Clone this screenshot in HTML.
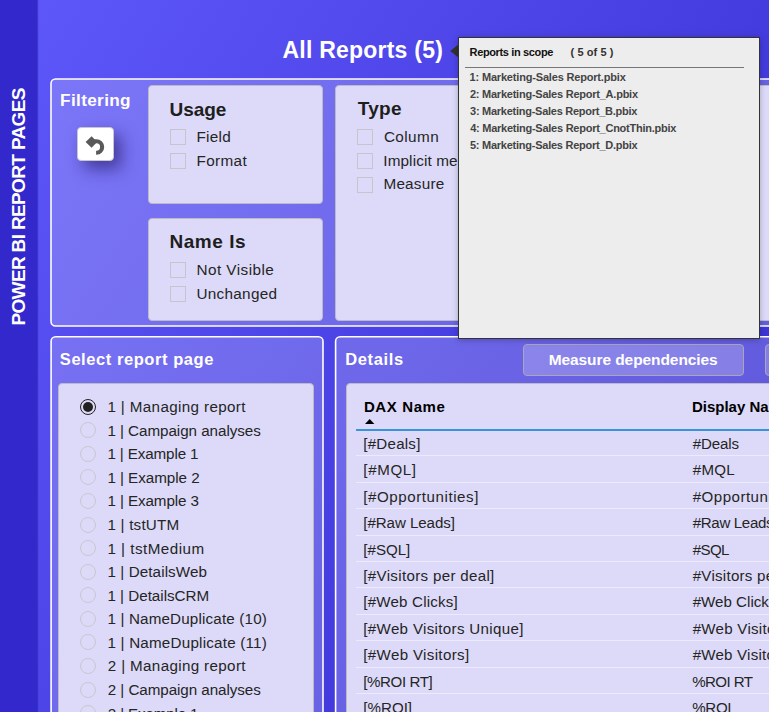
<!DOCTYPE html><html lang="en"><head><meta charset="utf-8"><title>Power BI Report Pages</title><style>
*{box-sizing:border-box;margin:0;padding:0}
html,body{width:769px;height:712px;overflow:hidden}
body{position:relative;font-family:"Liberation Sans",sans-serif;background:#4a3fe2}
#main{position:absolute;left:37px;top:0;width:732px;height:712px;background:linear-gradient(124deg,#5d56f9 0%,#352bce 100%)}
#side{position:absolute;left:0;top:0;width:37px;height:712px;background:#3228cc;box-shadow:1px 0 1px rgba(40,30,170,.55)}
.t{position:absolute;white-space:nowrap;line-height:1}
.card{position:absolute;background:#dcdaf8;border:1px solid #bcbac2;border-radius:4px}
.cb{position:absolute;width:16px;height:16px;border:1px solid #c6c4cc;background:transparent}
.rd{position:absolute;width:16px;height:16px;border:1px solid #c9c7cf;border-radius:50%}
.rd.on{border-color:#222}
.rd.on:after{content:"";position:absolute;left:2px;top:2px;width:10px;height:10px;border-radius:50%;background:#222}
.hl{position:absolute;height:1px;background:#ecebfc}
#tip{position:absolute;left:458px;top:37px;width:302px;height:302px;background:#ededed;border:1px solid #333;box-shadow:0 1px 6px rgba(0,0,0,.25)}
.btn{position:absolute;background:rgba(255,255,255,.22);border:1px solid #aaa6b8;border-radius:4px}
</style></head><body>
<div id="main"></div><div id="side"></div>
<div class="t" id="sidetxt" style="left:0;top:0;color:#fff;font-weight:bold;font-size:19px;transform-origin:0 0;transform:translate(8.90px,325.57px) rotate(-90deg);letter-spacing:-0.644px">POWER BI REPORT PAGES</div>
<div class="t " style="left:282.43px;top:39.33px;font-size:23.00px;font-weight:bold;letter-spacing:0.231px;color:#fff;">All Reports (5)</div>
<svg style="position:absolute;left:0;top:0" width="769" height="712" viewBox="0 0 769 712"><g fill="rgba(255,255,255,.2)" stroke="#fff" stroke-width="1.6"><rect x="51" y="79" width="760" height="247" rx="4.5"/><rect x="51.1" y="336.8" width="271.9" height="400" rx="4.5"/><rect x="335.6" y="336.8" width="480" height="400" rx="4.5"/></g></svg>
<div class="t " style="left:60.05px;top:92.14px;font-size:17.20px;font-weight:bold;letter-spacing:0.345px;color:#fff;">Filtering</div>
<div style="position:absolute;left:77px;top:127px;width:37px;height:34px;background:#fff;border:1px solid #c9c7c9;border-radius:4px;box-shadow:7px 8px 16px rgba(25,15,85,.55)"></div>
<svg style="position:absolute;left:77px;top:127px" width="37" height="34" viewBox="77 127 37 34"><polygon points="85.6,141.9 91.6,136.2 97.2,141.9 91.6,147.7" fill="#595959"/><path d="M93 141.3 H96.4 A5.75 5.75 0 0 1 96.4 152.8 H96.1" fill="none" stroke="#595959" stroke-width="4.1"/></svg>
<div class="card" style="left:148px;top:85px;width:175px;height:119px"></div>
<div class="card" style="left:148px;top:218px;width:175px;height:103px"></div>
<div class="card" style="left:335px;top:85px;width:480px;height:236px"></div>
<div class="t " style="left:169.56px;top:99.52px;font-size:19.00px;font-weight:bold;letter-spacing:-0.034px;color:#1e1e1e;">Usage</div>
<div class="t " style="left:169.43px;top:232.32px;font-size:19.00px;font-weight:bold;letter-spacing:0.546px;color:#1e1e1e;">Name Is</div>
<div class="t " style="left:357.69px;top:99.32px;font-size:19.00px;font-weight:bold;letter-spacing:0.309px;color:#1e1e1e;">Type</div>
<div class="cb" style="left:170px;top:129px"></div>
<div class="t " style="left:196.44px;top:129.45px;font-size:15.30px;letter-spacing:0.270px;color:#252525;">Field</div>
<div class="cb" style="left:170px;top:153px"></div>
<div class="t " style="left:196.44px;top:153.35px;font-size:15.30px;letter-spacing:0.362px;color:#252525;">Format</div>
<div class="cb" style="left:170px;top:262px"></div>
<div class="t " style="left:196.44px;top:262.25px;font-size:15.30px;letter-spacing:0.458px;color:#252525;">Not Visible</div>
<div class="cb" style="left:170px;top:286px"></div>
<div class="t " style="left:196.52px;top:285.75px;font-size:15.30px;letter-spacing:0.275px;color:#252525;">Unchanged</div>
<div class="cb" style="left:357px;top:129px"></div>
<div class="t " style="left:383.92px;top:128.85px;font-size:15.30px;letter-spacing:0.410px;color:#252525;">Column</div>
<div class="cb" style="left:357px;top:153px"></div>
<div class="t " style="left:383.29px;top:152.75px;font-size:15.30px;letter-spacing:0.114px;color:#252525;">Implicit measure</div>
<div class="cb" style="left:357px;top:176.5px"></div>
<div class="t " style="left:383.44px;top:175.75px;font-size:15.30px;letter-spacing:0.218px;color:#252525;">Measure</div>
<div class="t " style="left:59.82px;top:350.83px;font-size:16.50px;font-weight:bold;letter-spacing:0.563px;color:#fff;">Select report page</div>
<div class="card" style="left:58px;top:383px;width:256px;height:340px"></div>
<div class="rd on" style="left:80px;top:398.80px"></div>
<div class="t " style="left:107.44px;top:399.23px;font-size:15.20px;letter-spacing:0.368px;color:#252525;">1 | Managing report</div>
<div class="rd" style="left:80px;top:422.36px"></div>
<div class="t " style="left:107.44px;top:422.79px;font-size:15.20px;letter-spacing:-0.042px;color:#252525;">1 | Campaign analyses</div>
<div class="rd" style="left:80px;top:445.92px"></div>
<div class="t " style="left:107.44px;top:446.35px;font-size:15.20px;letter-spacing:-0.122px;color:#252525;">1 | Example 1</div>
<div class="rd" style="left:80px;top:469.48px"></div>
<div class="t " style="left:107.44px;top:469.91px;font-size:15.20px;letter-spacing:-0.037px;color:#252525;">1 | Example 2</div>
<div class="rd" style="left:80px;top:493.04px"></div>
<div class="t " style="left:107.44px;top:493.47px;font-size:15.20px;letter-spacing:-0.086px;color:#252525;">1 | Example 3</div>
<div class="rd" style="left:80px;top:516.60px"></div>
<div class="t " style="left:107.44px;top:517.03px;font-size:15.20px;letter-spacing:0.221px;color:#252525;">1 | tstUTM</div>
<div class="rd" style="left:80px;top:540.16px"></div>
<div class="t " style="left:107.44px;top:540.59px;font-size:15.20px;letter-spacing:0.484px;color:#252525;">1 | tstMedium</div>
<div class="rd" style="left:80px;top:563.72px"></div>
<div class="t " style="left:107.44px;top:564.15px;font-size:15.20px;letter-spacing:0.101px;color:#252525;">1 | DetailsWeb</div>
<div class="rd" style="left:80px;top:587.28px"></div>
<div class="t " style="left:107.44px;top:587.71px;font-size:15.20px;letter-spacing:-0.009px;color:#252525;">1 | DetailsCRM</div>
<div class="rd" style="left:80px;top:610.84px"></div>
<div class="t " style="left:107.44px;top:611.27px;font-size:15.20px;letter-spacing:0.166px;color:#252525;">1 | NameDuplicate (10)</div>
<div class="rd" style="left:80px;top:634.40px"></div>
<div class="t " style="left:107.44px;top:634.83px;font-size:15.20px;letter-spacing:0.220px;color:#252525;">1 | NameDuplicate (11)</div>
<div class="rd" style="left:80px;top:657.96px"></div>
<div class="t " style="left:107.84px;top:658.39px;font-size:15.20px;letter-spacing:0.347px;color:#252525;">2 | Managing report</div>
<div class="rd" style="left:80px;top:681.52px"></div>
<div class="t " style="left:107.84px;top:681.95px;font-size:15.20px;letter-spacing:-0.062px;color:#252525;">2 | Campaign analyses</div>
<div class="rd" style="left:80px;top:705.08px"></div>
<div class="t " style="left:107.84px;top:705.51px;font-size:15.20px;letter-spacing:-0.155px;color:#252525;">2 | Example 1</div>
<div class="t " style="left:345.20px;top:350.93px;font-size:16.50px;font-weight:bold;letter-spacing:0.629px;color:#fff;">Details</div>
<div class="btn" style="left:523px;top:344px;width:221px;height:32px"></div>
<div class="btn" style="left:765px;top:344px;width:100px;height:32px"></div>
<div class="t " style="left:548.66px;top:352.28px;font-size:15.50px;font-weight:bold;letter-spacing:-0.079px;color:#fff;">Measure dependencies</div>
<div class="card" style="left:346px;top:383px;width:480px;height:340px"></div>
<div class="t " style="left:363.90px;top:398.90px;font-size:15.00px;font-weight:bold;letter-spacing:0.618px;color:#000;">DAX Name</div>
<div class="t " style="left:691.90px;top:399.10px;font-size:15.00px;font-weight:bold;color:#000;">Display Name</div>
<svg style="position:absolute;left:364px;top:418px" width="12" height="7" viewBox="0 0 12 7"><polygon points="1,6 5.7,1 10.4,6" fill="#000"/></svg>
<div class="hl" style="left:356px;top:428.5px;width:420px;height:2px;background:#3995da"></div>
<div class="t " style="left:363.32px;top:435.92px;font-size:15.10px;letter-spacing:0.237px;color:#252525;">[#Deals]</div>
<div class="t " style="left:692.73px;top:435.92px;font-size:15.10px;letter-spacing:-0.138px;color:#252525;">#Deals</div>
<div class="hl" style="left:356px;top:455.30px;width:420px"></div>
<div class="t " style="left:363.32px;top:462.32px;font-size:15.10px;letter-spacing:0.649px;color:#252525;">[#MQL]</div>
<div class="t " style="left:692.73px;top:462.32px;font-size:15.10px;letter-spacing:0.283px;color:#252525;">#MQL</div>
<div class="hl" style="left:356px;top:481.70px;width:420px"></div>
<div class="t " style="left:363.32px;top:488.72px;font-size:15.10px;letter-spacing:0.564px;color:#252525;">[#Opportunities]</div>
<div class="t " style="left:692.73px;top:488.72px;font-size:15.10px;letter-spacing:0.469px;color:#252525;">#Opportunities</div>
<div class="hl" style="left:356px;top:508.10px;width:420px"></div>
<div class="t " style="left:363.32px;top:515.12px;font-size:15.10px;letter-spacing:-0.062px;color:#252525;">[#Raw Leads]</div>
<div class="t " style="left:692.73px;top:515.12px;font-size:15.10px;letter-spacing:-0.337px;color:#252525;">#Raw Leads</div>
<div class="hl" style="left:356px;top:534.50px;width:420px"></div>
<div class="t " style="left:363.32px;top:541.52px;font-size:15.10px;letter-spacing:-0.010px;color:#252525;">[#SQL]</div>
<div class="t " style="left:692.73px;top:541.52px;font-size:15.10px;letter-spacing:-0.600px;color:#252525;">#SQL</div>
<div class="hl" style="left:356px;top:560.90px;width:420px"></div>
<div class="t " style="left:363.32px;top:567.92px;font-size:15.10px;letter-spacing:0.330px;color:#252525;">[#Visitors per deal]</div>
<div class="t " style="left:692.73px;top:567.92px;font-size:15.10px;letter-spacing:0.258px;color:#252525;">#Visitors per deal</div>
<div class="hl" style="left:356px;top:587.30px;width:420px"></div>
<div class="t " style="left:363.32px;top:594.32px;font-size:15.10px;letter-spacing:0.202px;color:#252525;">[#Web Clicks]</div>
<div class="t " style="left:692.73px;top:594.32px;font-size:15.10px;letter-spacing:0.008px;color:#252525;">#Web Clicks</div>
<div class="hl" style="left:356px;top:613.70px;width:420px"></div>
<div class="t " style="left:363.32px;top:620.72px;font-size:15.10px;letter-spacing:0.339px;color:#252525;">[#Web Visitors Unique]</div>
<div class="t " style="left:692.73px;top:620.72px;font-size:15.10px;letter-spacing:0.257px;color:#252525;">#Web Visitors Unique</div>
<div class="hl" style="left:356px;top:640.10px;width:420px"></div>
<div class="t " style="left:363.32px;top:647.12px;font-size:15.10px;letter-spacing:0.347px;color:#252525;">[#Web Visitors]</div>
<div class="t " style="left:692.73px;top:647.12px;font-size:15.10px;letter-spacing:0.209px;color:#252525;">#Web Visitors</div>
<div class="hl" style="left:356px;top:666.50px;width:420px"></div>
<div class="t " style="left:363.32px;top:673.52px;font-size:15.10px;letter-spacing:-0.420px;color:#252525;">[%ROI RT]</div>
<div class="t " style="left:692.26px;top:673.52px;font-size:15.10px;letter-spacing:-0.600px;color:#252525;">%ROI RT</div>
<div class="hl" style="left:356px;top:692.90px;width:420px"></div>
<div class="t " style="left:363.32px;top:699.92px;font-size:15.10px;letter-spacing:0.018px;color:#252525;">[%ROI]</div>
<div class="t " style="left:692.26px;top:699.92px;font-size:15.10px;letter-spacing:-0.313px;color:#252525;">%ROI</div>
<div class="hl" style="left:356px;top:719.30px;width:420px"></div>
<svg style="position:absolute;left:449px;top:43px" width="10" height="16" viewBox="0 0 10 16"><polygon points="1.2,8 10,1 10,15" fill="#333"/></svg>
<div id="tip"></div>
<div class="t " style="left:469.56px;top:46.59px;font-size:11.00px;font-weight:bold;letter-spacing:-0.362px;color:#111;">Reports in scope</div>
<div class="t " style="left:570.55px;top:46.59px;font-size:11.00px;font-weight:bold;letter-spacing:0.081px;color:#333;">( 5 of 5 )</div>
<div style="position:absolute;left:465px;top:67px;width:279px;height:1px;background:#777"></div>
<div class="t " style="left:469.61px;top:71.59px;font-size:11.00px;font-weight:bold;letter-spacing:-0.179px;color:#444;">1: Marketing-Sales Report.pbix</div>
<div class="t " style="left:469.92px;top:88.59px;font-size:11.00px;font-weight:bold;letter-spacing:-0.235px;color:#444;">2: Marketing-Sales Report_A.pbix</div>
<div class="t " style="left:470.05px;top:105.59px;font-size:11.00px;font-weight:bold;letter-spacing:-0.264px;color:#444;">3: Marketing-Sales Report_B.pbix</div>
<div class="t " style="left:470.13px;top:122.59px;font-size:11.00px;font-weight:bold;letter-spacing:-0.250px;color:#444;">4: Marketing-Sales Report_CnotThin.pbix</div>
<div class="t " style="left:469.96px;top:139.59px;font-size:11.00px;font-weight:bold;letter-spacing:-0.249px;color:#444;">5: Marketing-Sales Report_D.pbix</div>
</body></html>
